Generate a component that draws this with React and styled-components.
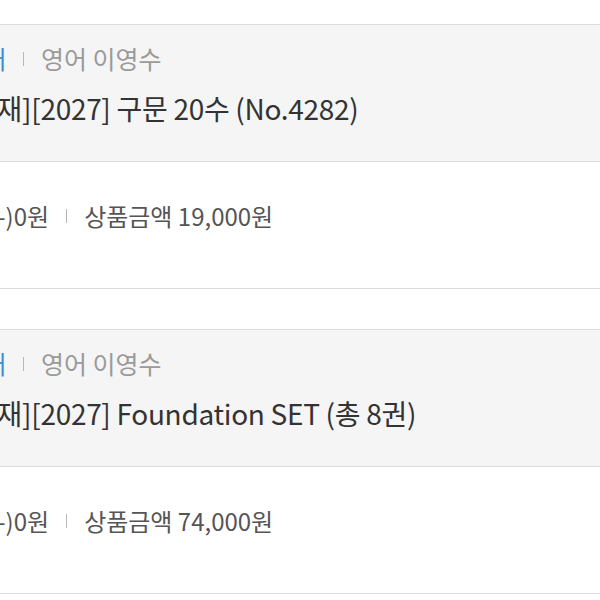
import React from "react";
import styled, { createGlobalStyle } from "styled-components";

const GlobalStyle = createGlobalStyle`
  html, body {
    margin: 0;
    padding: 0;
    background: #fff;
    overflow: hidden;
  }
  body {
    font-family: "Noto Sans CJK KR", "Noto Sans", sans-serif;
  }
`;

const List = styled.div`
  display: flex;
  flex-direction: column;
  gap: 40px;
  padding-top: 24px;
  margin-left: -38px;
  width: 680px;
`;

const Item = styled.div`
  border-top: 1px solid #dcdcdc;
  border-bottom: 1px solid #dcdcdc;
`;

const Head = styled.div`
  background: #f5f5f5;
  height: 137px;
  box-sizing: border-box;
  padding-top: 16px;
  border-bottom: 1px solid #dcdcdc;
`;

const Meta = styled.div`
  display: flex;
  align-items: center;
  font-size: 25px;
  line-height: 35px;
  color: #9a9a9a;
`;

const Category = styled.span`
  color: #3b8ed8;
  margin-left: -2px;
`;

const Bar = styled.span`
  display: inline-block;
  width: 1px;
  height: 14px;
  background: #b8b8b8;
  margin: 0 ${(p) => p.$space || 18}px;
`;

const Title = styled.div`
  margin-top: 14px;
  font-size: 28px;
  line-height: 36px;
  color: #333;
  letter-spacing: -0.3px;
`;

const Body = styled.div`
  height: 126px;
  box-sizing: border-box;
  padding-top: 37px;
`;

const Price = styled.div`
  display: flex;
  align-items: center;
  margin-left: -17px;
  font-size: 24px;
  line-height: 34px;
  color: #555;
`;

const items = [
  { title: "[교재][2027] 구문 20수 (No.4282)", price: "19,000" },
  { title: "[교재][2027] Foundation SET (총 8권)", price: "74,000" },
  { title: "[교재][2027] 독해 30제 (No.4283)", price: "21,000" },
];

const App = () => {
  return (
    <>
      <GlobalStyle />
      <List>
        {items.map((it) => (
          <Item key={it.title}>
            <Head>
              <Meta>
                <Category>교재</Category>
                <Bar $space={17} />
                영어 이영수
              </Meta>
              <Title>{it.title}</Title>
            </Head>
            <Body>
              <Price>
                할인(-)0원
                <Bar $space={17} />
                상품금액 {it.price}원
              </Price>
            </Body>
          </Item>
        ))}
      </List>
    </>
  );
};

export default App;
